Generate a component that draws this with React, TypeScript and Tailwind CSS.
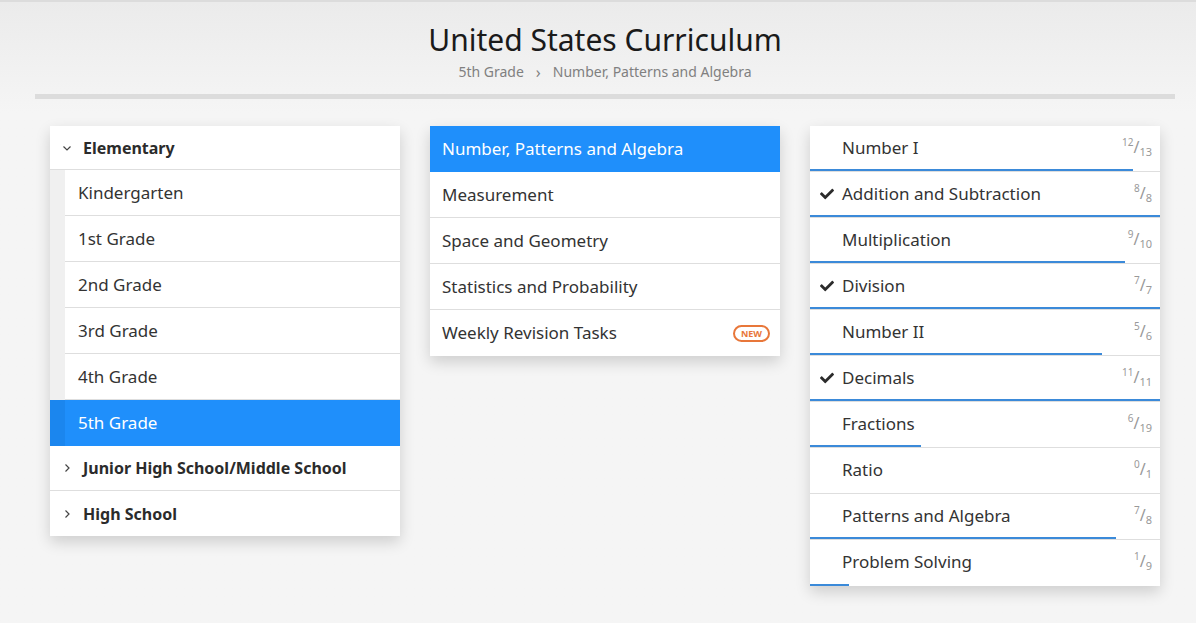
import { FaCheck } from 'react-icons/fa';

const grades = ['Kindergarten', '1st Grade', '2nd Grade', '3rd Grade', '4th Grade', '5th Grade'];

const strands = [
  'Number, Patterns and Algebra',
  'Measurement',
  'Space and Geometry',
  'Statistics and Probability',
  'Weekly Revision Tasks',
];

const topics: { name: string; done: number; total: number }[] = [
  { name: 'Number I', done: 12, total: 13 },
  { name: 'Addition and Subtraction', done: 8, total: 8 },
  { name: 'Multiplication', done: 9, total: 10 },
  { name: 'Division', done: 7, total: 7 },
  { name: 'Number II', done: 5, total: 6 },
  { name: 'Decimals', done: 11, total: 11 },
  { name: 'Fractions', done: 6, total: 19 },
  { name: 'Ratio', done: 0, total: 1 },
  { name: 'Patterns and Algebra', done: 7, total: 8 },
  { name: 'Problem Solving', done: 1, total: 9 },
];

function Chevron({ down }: { down?: boolean }) {
  return (
    <svg width="10" height="10" viewBox="0 0 10 10" className="text-[#444]">
      {down ? (
        <path d="M1.5 3.5 L5 7 L8.5 3.5" fill="none" stroke="currentColor" strokeWidth="1.2" />
      ) : (
        <path d="M3.5 1.5 L7 5 L3.5 8.5" fill="none" stroke="currentColor" strokeWidth="1.2" />
      )}
    </svg>
  );
}

function GradePanel() {
  return (
    <div className="w-[350px] shrink-0 bg-white shadow-[0_6px_14px_rgba(0,0,0,0.16)]">
      <div className="flex h-[44px] items-center gap-[11px] border-b border-[#dedede] pl-[12px] text-[16px] font-bold text-[#2b2b2b]">
        <Chevron down />
        <span>Elementary</span>
      </div>
      {grades.map((g) => {
        const active = g === '5th Grade';
        return (
          <div key={g} className={`flex h-[46px] ${active ? 'bg-[#1f8ffb]' : 'bg-[#f0f0f0]'}`}>
            <div className={`w-[15px] ${active ? 'bg-[#1b86ee]' : ''}`} />
            <div
              className={`flex flex-1 items-center border-b pl-[13px] text-[17px] ${
                active ? 'border-[#1f8ffb] bg-[#1f8ffb] text-white' : 'border-[#dedede] bg-white text-[#333]'
              }`}
            >
              {g}
            </div>
          </div>
        );
      })}
      {['Junior High School/Middle School', 'High School'].map((s, i) => (
        <div
          key={s}
          className={`flex h-[45px] items-center gap-[11px] pl-[12px] text-[16px] font-bold text-[#2b2b2b] ${
            i === 0 ? 'border-b border-[#dedede]' : ''
          }`}
        >
          <Chevron />
          <span>{s}</span>
        </div>
      ))}
    </div>
  );
}

function StrandPanel() {
  return (
    <div className="w-[350px] shrink-0 bg-white shadow-[0_6px_14px_rgba(0,0,0,0.16)]">
      {strands.map((s, i) => {
        const active = i === 0;
        return (
          <div
            key={s}
            className={`flex h-[46px] items-center justify-between pl-[12px] pr-[10px] text-[17px] ${
              active ? 'bg-[#1f8ffb] text-white' : 'text-[#333]'
            } ${i < strands.length - 1 && !active ? 'border-b border-[#dedede]' : ''}`}
          >
            <span>{s}</span>
            {s === 'Weekly Revision Tasks' && (
              <span className="rounded-full border-2 border-[#e8773a] px-[6px] text-[9px] leading-[13px] font-bold text-[#e8773a]">
                NEW
              </span>
            )}
          </div>
        );
      })}
    </div>
  );
}

function TopicPanel() {
  return (
    <div className="w-[350px] shrink-0 bg-white shadow-[0_6px_14px_rgba(0,0,0,0.16)]">
      {topics.map((t, i) => {
        const complete = t.done === t.total;
        const pct = (t.done / t.total) * 100;
        return (
          <div key={t.name} className={`flex h-[46px] flex-col ${i < topics.length - 1 ? 'border-b border-[#dedede]' : ''}`}>
            <div className="flex flex-1 items-center pr-[8px]">
              <div className="flex w-[32px] justify-end pr-[8px]">
                {complete && <FaCheck className="text-[14px] text-[#2b2b2b]" />}
              </div>
              <span className="flex-1 text-[17px] text-[#333]">{t.name}</span>
              <span className="flex items-start text-[#999]">
                <span className="mt-[-2px] text-[10px] leading-[12px]">{t.done}</span>
                <span className="text-[16px] leading-[18px]">/</span>
                <span className="mt-[8px] text-[11px] leading-[12px]">{t.total}</span>
              </span>
            </div>
            <div className="h-[2px]">
              {t.done > 0 && <div className="h-[2px] bg-[#3b8ad9]" style={{ width: `${pct}%` }} />}
            </div>
          </div>
        );
      })}
    </div>
  );
}

export default function App() {
  return (
    <div
      className="h-[623px] overflow-hidden border-t-2 border-[#dcdcdc] bg-[#f5f5f5] bg-gradient-to-b from-[#ebebeb] to-[#f5f5f5] to-[110px]"
      style={{ fontFamily: '"Noto Sans", "Open Sans", sans-serif' }}
    >
      <div className="w-[1210px]">
        <div className="flex flex-col items-center pt-[19px]">
          <h1 className="text-[30px] leading-[38px] text-[#1a1a1a]">United States Curriculum</h1>
          <div className="mt-[3px] flex items-center gap-[12px] text-[14px] leading-[20px] text-[#808080]">
            <span>5th Grade</span>
            <span className="text-[16px]">›</span>
            <span>Number, Patterns and Algebra</span>
          </div>
        </div>
        <div className="mx-[35px] mt-[12px] h-[5px] bg-[#dcdcdc]" />
        <div className="flex items-start gap-[30px] px-[50px] pt-[27px]">
          <GradePanel />
          <StrandPanel />
          <TopicPanel />
        </div>
      </div>
    </div>
  );
}
